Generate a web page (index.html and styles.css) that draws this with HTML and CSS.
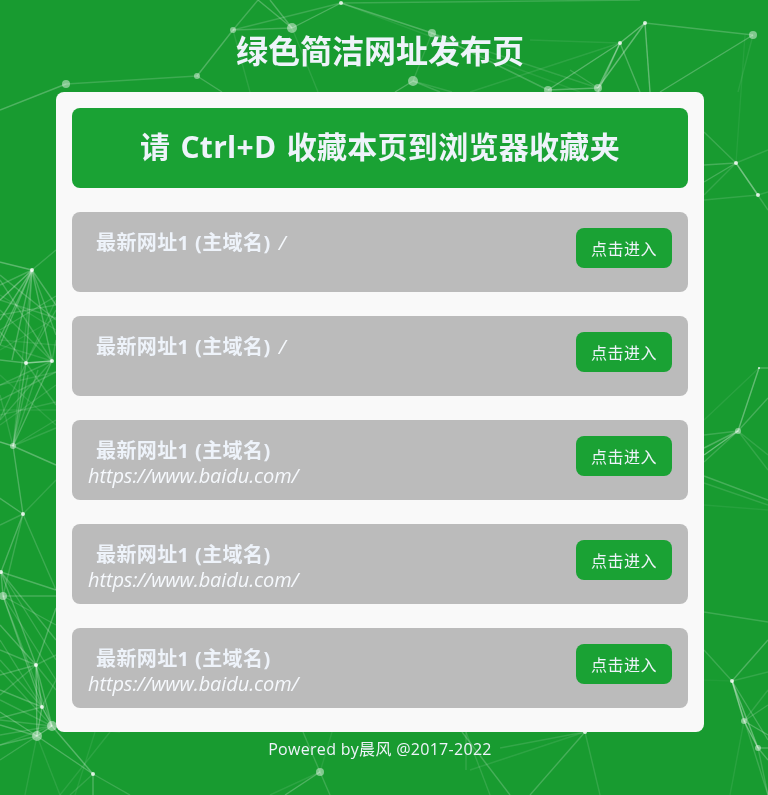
FILE: index.html
```html
<!DOCTYPE html>
<html lang="en">

<head>
    <meta charset="UTF-8">
    <meta name="viewport" content="width=device-width, initial-scale=1.0">
    <title>绿色简洁网址发布页</title>
    <link rel="stylesheet" href="styles.css">
</head>

<body>
    <canvas id="particles" width="768" height="795"></canvas>

    <div class="page">
        <h1 class="page-title">绿色简洁网址发布页</h1>

        <main class="panel">
            <h2 class="banner">请 Ctrl+D 收藏本页到浏览器收藏夹</h2>

            <div class="site-row">
                <div class="site-info"><span class="site-name">最新网址1 (主域名)</span> <em class="site-url">/</em></div>
                <a class="enter-btn" href="#">点击进入</a>
            </div>
            <div class="site-row">
                <div class="site-info"><span class="site-name">最新网址1 (主域名)</span> <em class="site-url">/</em></div>
                <a class="enter-btn" href="#">点击进入</a>
            </div>
            <div class="site-row">
                <div class="site-info"><span class="site-name">最新网址1 (主域名)</span> <em class="site-url long">https://www.baidu.com/</em></div>
                <a class="enter-btn" href="#">点击进入</a>
            </div>
            <div class="site-row">
                <div class="site-info"><span class="site-name">最新网址1 (主域名)</span> <em class="site-url long">https://www.baidu.com/</em></div>
                <a class="enter-btn" href="#">点击进入</a>
            </div>
            <div class="site-row">
                <div class="site-info"><span class="site-name">最新网址1 (主域名)</span> <em class="site-url long">https://www.baidu.com/</em></div>
                <a class="enter-btn" href="#">点击进入</a>
            </div>
        </main>

        <footer class="page-footer">Powered by晨风 @2017-2022</footer>
    </div>

    <script src="script.js"></script>
</body>

</html>
```

FILE: styles.css
```css
/* General styles */
body {
    font-family: "Open Sans", "Noto Sans CJK SC", sans-serif;
    margin: 0;
    padding: 0;
    background-color: #189b30;
    color: #eef3fa;
}

/* Particle network sits behind everything */
#particles {
    position: absolute;
    top: 0;
    left: 0;
    z-index: 0;
    filter: blur(0.4px);
}

.page {
    position: relative;
    width: 760px;
}

.page-title {
    margin: 0;
    height: 92px;
    line-height: 102px;
    font-size: 32px;
    font-weight: 700;
    text-align: center;
}

.panel {
    width: 616px;
    margin: 0 auto;
    padding: 16px 16px 24px;
    background-color: #f9f9f9;
    border-radius: 8px;
    display: flex;
    flex-direction: column;
    gap: 24px;
}

.banner {
    margin: 0;
    height: 80px;
    line-height: 78px;
    font-size: 30px;
    font-weight: 700;
    letter-spacing: 0.3px;
    word-spacing: 2px;
    text-align: center;
    background-color: #1aa234;
    border-radius: 8px;
}

.site-row {
    height: 48px;
    padding: 16px;
    background-color: #bbbbbb;
    border-radius: 8px;
    display: flex;
    justify-content: space-between;
    align-items: flex-start;
}

.site-info {
    font-size: 20px;
    line-height: 26px;
    margin-top: 2px;
}

.site-name {
    font-weight: 700;
    letter-spacing: 0.4px;
    margin-left: 8px;
}

.site-url {
    font-family: "Open Sans", sans-serif;
    font-style: italic;
    letter-spacing: -0.1px;
    color: #f6f9fd;
    margin-left: 3px;
}

.site-url.long {
    display: block;
    margin-left: 0;
    margin-top: -1px;
}

.enter-btn {
    width: 96px;
    height: 40px;
    line-height: 42px;
    font-size: 16px;
    letter-spacing: 0.5px;
    text-align: center;
    color: #eef3fa;
    text-decoration: none;
    background-color: #1aa234;
    border-radius: 8px;
}

.page-footer {
    height: 36px;
    line-height: 35px;
    font-size: 16px;
    letter-spacing: 0.3px;
    text-align: center;
}
```

FILE: script.js
```js
// Particle network: a still frame of nodes and the links between them
const nodes = {
    a: [341, 3, 2], b: [292, 28, 5], c: [233, 30, 3], d: [432, 33, 4], e: [197, 76, 3],
    f: [66, 84, 4], g: [413, 81, 5], h: [645, 23, 2], i: [620, 43, 2], j: [753, 35, 4],
    k: [548, 90, 4], l: [598, 88, 4], m: [736, 163, 2], n: [758, 195, 2],
    o: [32, 270, 2], p: [26, 363, 2], q: [52, 361, 2], r: [13, 446, 3], s: [23, 514, 2],
    t: [1, 572, 2], u: [3, 596, 4], v: [36, 665, 2], w: [42, 707, 2], x: [52, 726, 5],
    y: [37, 736, 5], z: [93, 774, 2],
    A: [320, 772, 4], B: [585, 732, 2], C: [759, 368, 1], D: [738, 431, 3],
    E: [732, 681, 2], F: [744, 721, 3], G: [758, 748, 3]
};

// [from, to, alpha] - a plain [x, y] end means the link runs off behind the panel or screen
const links = [
    ['a', 'b', .3], ['a', 'd', .3], ['a', 'c', .2], ['a', [640, 0], .2], ['b', 'c', .25], ['c', 'e', .3],
    ['b', [258, 0], .3], ['b', [270, 0], .3], ['c', [258, 0], .25], ['e', 'f', .2], ['f', [0, 110], .3],
    ['e', [222, 92], .25], ['c', [250, 92], .12], ['b', [318, 92], .12], ['g', 'd', .15], ['g', [395, 92], .3],
    ['d', [548, 90], .25], ['g', [440, 92], .2], ['g', [452, 92], .15], ['d', 'l', .15], ['a', [580, 92], .1],
    ['h', 'j', .25], ['h', 'i', .4], ['h', 'l', .4], ['i', 'l', .4], ['i', 'k', .35], ['k', 'l', .35],
    ['h', [650, 92], .4], ['i', [640, 92], .3], ['i', [598, 92], .3], ['j', [660, 92], .3],
    ['i', [470, 92], .12], ['l', [570, 70], .2], ['i', [530, 40], .1], ['j', [738, 92], .1],
    ['m', [704, 132], .2], ['m', [704, 165], .25], ['m', [704, 182], .25], ['m', 'n', .35], ['m', [768, 150], .15],
    ['m', [768, 210], .2], ['n', [704, 200], .15], ['n', [768, 192], .15], ['m', [704, 195], .15], ['m', [745, 35], .08],
    ['o', [0, 300], .4], ['o', [0, 320], .35], ['o', [0, 345], .3], ['o', [-30, 255], .2], ['o', [56, 250], .2],
    ['o', 'p', .3], ['o', 'q', .3], ['o', [56, 305], .3], ['o', [12, 360], .3], ['o', [-20, 380], .3],
    ['o', 'r', .15], ['o', [56, 335], .25], ['o', [0, 262], .2], ['o', [0, 285], .25],
    ['p', 'q', .6], ['p', [0, 360], .3], ['p', [56, 405], .2], ['p', 'r', .3], ['p', [-10, 320], .25],
    ['p', [-10, 440], .2], ['q', [0, 280], .25], ['q', 'r', .3], ['q', [0, 310], .2], ['q', [56, 340], .2],
    ['q', [0, 420], .2], ['p', [56, 310], .2], ['p', [56, 300], .15], ['q', [0, 385], .2], ['q', [0, 345], .15],
    [[0, 275], [56, 320], .25], [[0, 300], [56, 318], .2], [[0, 330], [56, 296], .2], [[0, 315], [56, 305], .2],
    [[0, 295], [56, 330], .15], [[0, 340], [56, 345], .12], [[0, 350], [56, 318], .12],
    [[0, 400], [56, 372], .2], [[0, 415], [56, 402], .15], [[0, 385], [56, 372], .15], [[0, 410], [56, 410], .1],
    [[0, 425], [56, 385], .15], [[0, 375], [56, 425], .12],
    ['r', [0, 442], .4], ['r', [56, 465], .35], ['r', 's', .3], ['r', [56, 420], .15], ['r', [56, 428], .15],
    ['r', [28, 375], .2], ['r', [38, 370], .2], ['r', [0, 395], .15],
    ['s', [-5, 495], .3], ['s', [0, 525], .2], ['s', [56, 480], .15], ['s', [56, 590], .2], ['s', 't', .3], ['s', 'u', .2],
    ['t', 'u', .3], ['t', 'v', .3], ['t', [56, 590], .3], ['t', [56, 640], .25], ['t', [56, 660], .2],
    ['u', [56, 596], .25], ['u', 'w', .3], ['u', [56, 680], .2], ['u', 'x', .2], ['u', [56, 625], .2],
    ['v', 'w', .35], ['v', 'y', .35], ['v', [0, 625], .3], ['v', [0, 650], .25], ['v', [0, 675], .25],
    ['v', [56, 608], .3], ['v', [56, 655], .2], ['v', [56, 690], .2], ['v', [0, 695], .2], ['v', 'x', .3],
    ['w', 'y', .35], ['w', 'x', .4], ['w', [0, 690], .3], ['w', [0, 718], .25], ['w', [56, 680], .2],
    ['y', 'x', .4], ['y', [0, 712], .3], ['y', [0, 725], .3], ['y', [0, 745], .25], ['y', [0, 760], .2],
    ['x', [0, 720], .2], ['x', [0, 700], .2], ['y', [25, 795], .12], ['y', [60, 795], .12],
    ['w', [0, 640], .2], ['w', [0, 660], .2], ['x', [0, 670], .2], ['x', [0, 735], .2], ['x', [0, 745], .15],
    ['y', 'z', .3], ['x', 'z', .35], ['z', [93, 795], .3], ['z', [130, 795], .2], ['z', [70, 795], .15],
    ['x', [120, 732], .12], [[110, 732], [60, 795], .12], [[95, 732], [75, 795], .1],
    ['A', [285, 795], .3], ['A', [303, 732], .2], ['A', [330, 795], .2], ['A', [270, 795], .12], ['A', [332, 732], .1],
    ['B', [530, 795], .25], ['B', [600, 795], .15], ['B', [500, 748], .15], [[462, 732], [510, 795], .25],
    [[466, 732], [490, 795], .15], [[466, 732], [466, 770], .15], ['B', [470, 770], .12],
    ['C', [768, 368], .3], ['C', 'D', .4], ['C', [704, 420], .1], ['D', [704, 455], .45], ['D', [704, 435], .2],
    ['D', [704, 448], .3], ['D', [704, 462], .2], ['D', [768, 398], .25], ['D', [768, 470], .15], ['D', [768, 455], .15],
    [[704, 476], [768, 500], .25], [[704, 483], [768, 505], .15], [[704, 505], [768, 510], .08],
    [[704, 612], [768, 622], .2], ['E', [768, 640], .3], ['E', [704, 650], .2], ['E', [768, 672], .15],
    ['E', 'F', .45], ['E', 'G', .4], ['E', [768, 740], .25], ['E', [768, 795], .2], ['E', [704, 680], .05],
    ['F', 'G', .45], ['F', [768, 735], .3], ['F', [768, 705], .2], ['G', [768, 748], .3], ['G', [768, 760], .3],
    ['G', [768, 795], .2], ['F', [730, 795], .1], ['F', [768, 690], .15]
];

const canvas = document.getElementById('particles');
const ctx = canvas.getContext('2d');

function point(ref) {
    return typeof ref === 'string' ? nodes[ref] : ref;
}

links.forEach(([from, to, alpha]) => {
    const p1 = point(from);
    const p2 = point(to);
    ctx.strokeStyle = `rgba(255, 255, 255, ${alpha * 0.8})`;
    ctx.lineWidth = 1.4;
    ctx.beginPath();
    ctx.moveTo(p1[0], p1[1]);
    ctx.lineTo(p2[0], p2[1]);
    ctx.stroke();
});

Object.values(nodes).forEach(([x, y, r]) => {
    // Bigger nodes look paler and softer in the reference
    ctx.fillStyle = `rgba(255, 255, 255, ${r > 2 ? 0.45 : 0.8})`;
    ctx.beginPath();
    ctx.arc(x, y, r, 0, Math.PI * 2);
    ctx.fill();
});
```
